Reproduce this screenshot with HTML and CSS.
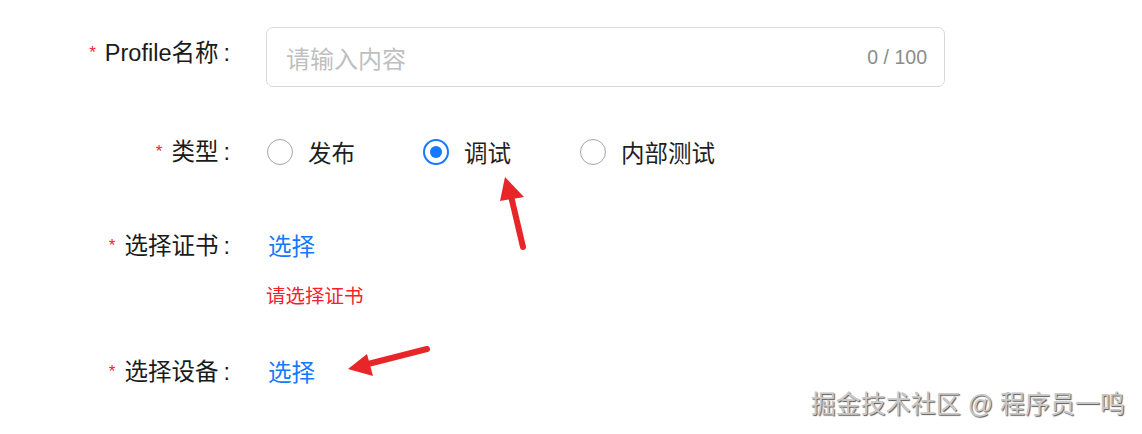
FILE: index.html
```
<!DOCTYPE html>
<html lang="zh-CN">
<head>
  <meta charset="UTF-8" />
  <title>Profile</title>
  <link rel="stylesheet" href="styles.css">
</head>
<body>
  <div class="form">
    <div class="item item-name">
      <label class="label required">Profile名称</label>
      <div class="control">
        <div class="input">
          <span class="placeholder">请输入内容</span>
          <span class="count">0 / 100</span>
        </div>
      </div>
    </div>

    <div class="item item-type">
      <label class="label required">类型</label>
      <div class="control radios">
        <span class="radio"><span class="dot"></span>发布</span>
        <span class="radio checked"><span class="dot"></span>调试</span>
        <span class="radio"><span class="dot"></span>内部测试</span>
      </div>
    </div>

    <div class="item item-cert">
      <label class="label required">选择证书</label>
      <div class="control">
        <a class="link">选择</a>
        <div class="error">请选择证书</div>
      </div>
    </div>

    <div class="item item-device">
      <label class="label required">选择设备</label>
      <div class="control">
        <a class="link">选择</a>
      </div>
    </div>
  </div>

  <svg class="arrows" width="1142" height="434" viewBox="0 0 1142 434">
    <line x1="523" y1="247" x2="511" y2="196" stroke="#e8262a" stroke-width="6" stroke-linecap="round"/>
    <polygon points="505,177 500,201 524,197" fill="#e8262a"/>
    <line x1="427" y1="349" x2="368" y2="364" stroke="#e8262a" stroke-width="6" stroke-linecap="round"/>
    <polygon points="348,369 367,354 373,376" fill="#e8262a"/>
  </svg>

  <div class="watermark">掘金技术社区 @ 程序员一鸣</div>
</body>
</html>
```

FILE: styles.css
```
body {
  margin: 0;
  font-family: "Liberation Sans", "Noto Sans CJK SC", sans-serif;
  background: #fff;
  color: #1f1f1f;
  position: relative;
  width: 1142px;
  height: 434px;
  overflow: hidden;
}
.form {
  padding-top: 27px;
}
.item {
  display: grid;
  grid-template-columns: 234px 679px;
  column-gap: 32px;
  align-items: start;
}
.label {
  text-align: right;
  font-size: 23.5px;
  line-height: 40px;
  color: #1a1a1a;
}
.required::before {
  content: "*";
  color: #f5222d;
  font-size: 17px;
  margin-right: 9px;
  vertical-align: 3px;
}
.label::after {
  content: ":";
  margin-left: 5px;
  margin-right: 4px;
}
.item-name .label {
  line-height: 52px;
}
.item-type {
  margin-top: 45px;
}
.item-cert {
  margin-top: 54px;
}
.item-device {
  margin-top: 43px;
}
.input {
  height: 58px;
  border: 1px solid #d9d9d9;
  border-radius: 7px;
  display: flex;
  align-items: center;
  justify-content: space-between;
  padding: 0 17px 0 19px;
}
.placeholder {
  font-size: 24px;
  color: #bfbfbf;
}
.count {
  font-size: 19.5px;
  color: #8c8c8c;
}
.radios {
  display: flex;
  align-items: center;
  height: 40px;
}
.radio {
  display: flex;
  align-items: center;
  font-size: 23.5px;
  width: 156px;
}
.radio:nth-child(2) {
  width: 157px;
}
.dot {
  width: 26px;
  height: 26px;
  border: 1.5px solid #a6a6a6;
  border-radius: 50%;
  margin-right: 15px;
  box-sizing: border-box;
  margin-left: 1px;
  flex-shrink: 0;
}
.radio.checked .dot {
  border: 2px solid #1677ff;
  position: relative;
}
.radio.checked .dot::after {
  content: "";
  position: absolute;
  left: 5px;
  top: 5px;
  width: 12px;
  height: 12px;
  border-radius: 50%;
  background: #1677ff;
}
.link {
  display: block;
  color: #1677ff;
  font-size: 23.5px;
  line-height: 42px;
  margin-left: 2px;
}
.error {
  color: #f5222d;
  font-size: 19.5px;
  line-height: 26px;
  margin-top: 15px;
}
.arrows {
  position: absolute;
  left: 0;
  top: 0;
  pointer-events: none;
}
.watermark {
  position: absolute;
  right: 17px;
  top: 387px;
  font-size: 25px;
  line-height: 34px;
  color: #c8c8c8;
  text-shadow: 1px 1px 1px #5a5a5a;
}
```
